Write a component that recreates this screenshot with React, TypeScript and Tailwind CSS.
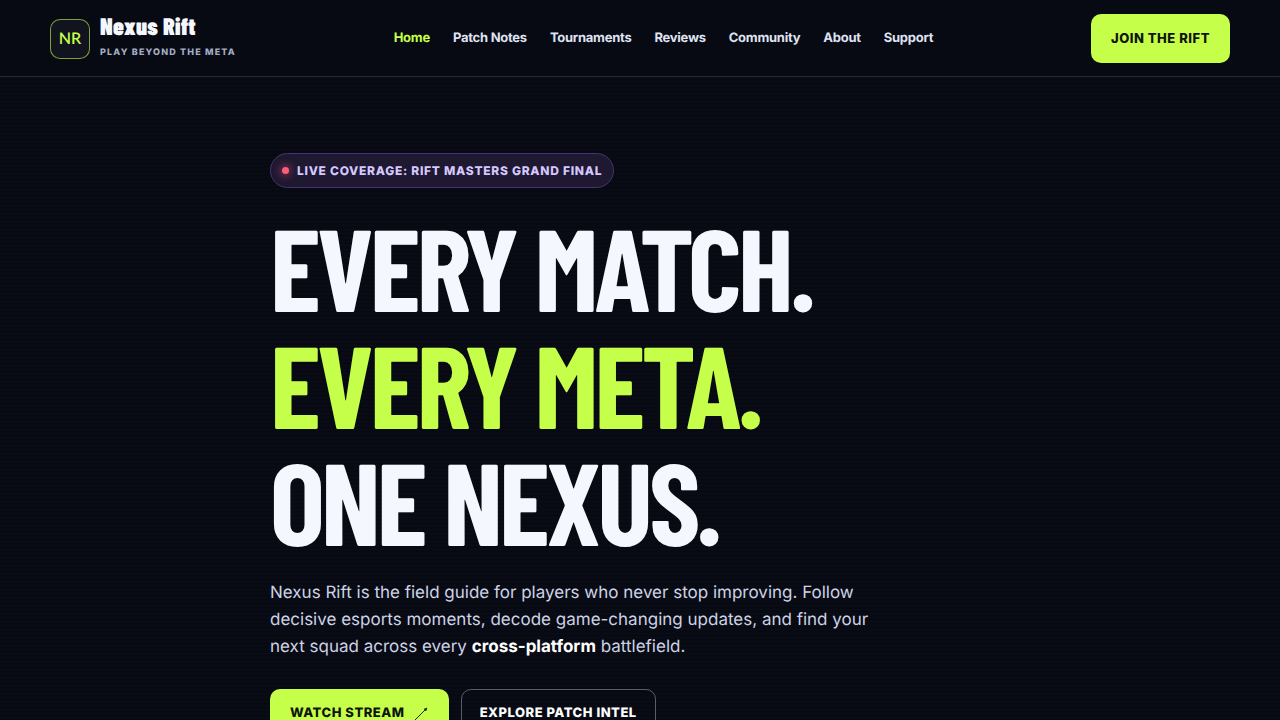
const NAV_LINKS = [
  { label: "Home", href: "#home" },
  { label: "Patch Notes", href: "#patch-notes" },
  { label: "Tournaments", href: "#tournaments" },
  { label: "Reviews", href: "#reviews" },
  { label: "Community", href: "#community" },
  { label: "About", href: "#about" },
  { label: "Support", href: "#support" },
];

const display = "font-['Barlow_Condensed','Liberation_Sans_Narrow',sans-serif]";

function Brand() {
  return (
    <a href="#home" className="flex items-center gap-2.5">
      <span className="flex size-10 items-center justify-center rounded-[10px] border border-[#c6ff4a]/60 bg-[#11141f] font-[Lato,sans-serif] text-base font-semibold text-[#c6ff4a]">
        NR
      </span>
      <span className="flex flex-col gap-[9px] pb-1">
        <span className={`${display} text-2xl leading-6 font-black tracking-[0.01em]`}>Nexus Rift</span>
        <span className="text-[9px] leading-3 font-extrabold tracking-[0.13em] text-[#a5abc4] uppercase">
          Play beyond the meta
        </span>
      </span>
    </a>
  );
}

function Header() {
  return (
    <header className="flex items-center justify-between border-b border-[#242732] bg-[#070a12] px-[50px] pt-3.5 pb-[13px]">
      <Brand />
      <nav aria-label="Main" className="flex items-center gap-[23px] text-[13px] font-bold tracking-[-0.02em]">
        {NAV_LINKS.map((link, i) => (
          <a
            key={link.href}
            href={link.href}
            aria-current={i === 0 ? "page" : undefined}
            className={i === 0 ? "text-[#c6ff4a]" : "text-[#dfe2f2] hover:text-white"}
          >
            {link.label}
          </a>
        ))}
      </nav>
      <button
        type="button"
        className="h-[49px] cursor-pointer rounded-[10px] bg-[#c6ff4a] px-5 text-[13px] font-extrabold tracking-[0.04em] text-[#10150a] uppercase"
      >
        Join the Rift
      </button>
    </header>
  );
}

function Hero() {
  return (
    <main
      id="home"
      className="bg-[repeating-linear-gradient(to_bottom,#0a0d15_0px,#0a0d15_1px,#070a12_1px,#070a12_4px)] px-6 pt-[76px] pb-20"
    >
      <div className="mx-auto max-w-[740px]">
        <p className="inline-flex h-[35px] items-center gap-2 rounded-full border border-[#46336f] bg-[#1e1830] px-[11px] text-xs font-extrabold tracking-[0.06em] text-[#d5c8ff] uppercase">
          <span className="size-[7px] rounded-full bg-[#ff5c7c] shadow-[0_0_10px_#ff5c7c]" />
          Live coverage: Rift Masters Grand Final
        </p>

        <h1
          className={`${display} mt-5 text-[116px] leading-[117px] font-bold tracking-[-0.033em] whitespace-nowrap uppercase`}
        >
          <span className="block">Every match.</span>
          <span className="block text-[#c6ff4a]">Every meta.</span>
          <span className="block">One Nexus.</span>
        </h1>

        <p className="mt-[21px] max-w-[620px] text-[17px] leading-[27px] text-[#cdd2e6]">
          Nexus Rift is the field guide for players who never stop improving. Follow decisive esports moments,
          decode game-changing updates, and find your next squad across every{" "}
          <strong className="font-bold text-white">cross-platform</strong> battlefield.
        </p>

        <div className="mt-7 flex flex-wrap gap-3 text-[13px] font-extrabold tracking-[0.04em] uppercase">
          <a
            href="#stream"
            className="flex h-[49px] items-center gap-2 rounded-[10px] bg-[#c6ff4a] px-5 text-[#10150a]"
          >
            Watch stream
            <svg viewBox="0 0 16 16" className="size-4" fill="none" stroke="currentColor" aria-hidden="true">
              <path d="M2 14 13.5 2.5" strokeWidth="0.9" />
              <path d="M11 3 14 2l-1 3z" fill="currentColor" strokeWidth="0.4" />
            </svg>
          </a>
          <a
            href="#patch-notes"
            className="flex h-[49px] items-center rounded-[10px] border border-[#5a5d68] px-[18px] text-white"
          >
            Explore patch intel
          </a>
        </div>
      </div>
    </main>
  );
}

export default function App() {
  return (
    <div className="min-h-screen bg-[#070a12] font-[Inter,sans-serif] text-[#f5f7ff] antialiased [text-rendering:geometricPrecision]">
      <Header />
      <Hero />
    </div>
  );
}
